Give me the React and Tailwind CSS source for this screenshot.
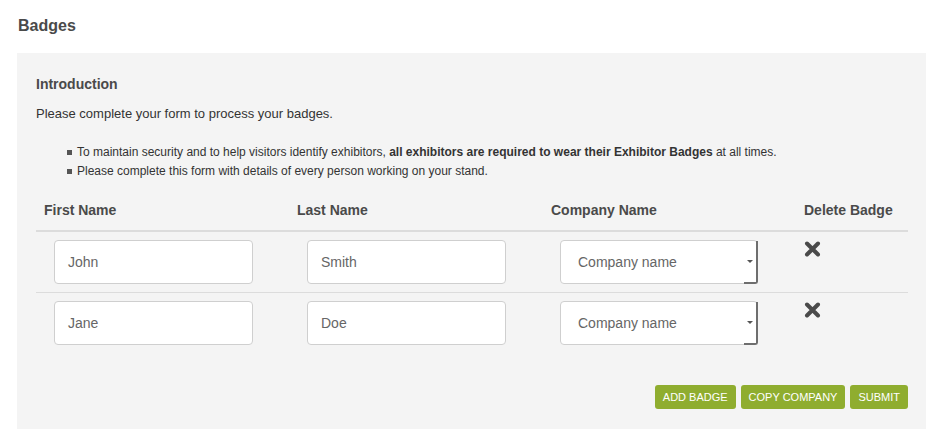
import React from 'react';

const badges = [
  { first: 'John', last: 'Smith' },
  { first: 'Jane', last: 'Doe' },
];

const CloseIcon = () => (
  <svg width="17" height="16" viewBox="0 0 17 16">
    <path d="M3 2.5 L14 13.5 M14 2.5 L3 13.5" stroke="#4a4a4a" strokeWidth="4" strokeLinecap="round" />
  </svg>
);

const TextBox = ({ value }) => (
  <div className="w-[199px] h-[44px] bg-white border border-[#cfcfcf] rounded-[4px] flex items-center px-[13px] text-[14px] text-[#666]">
    {value}
  </div>
);

const CompanySelect = () => (
  <div className="w-[198px] h-[44px] bg-white border border-[#cfcfcf] rounded-[4px] flex text-[14px] text-[#666]">
    <div className="flex-1 flex items-center pl-[17px]">Company name</div>
    <div className="w-[14px] flex items-center justify-center border-r-2 border-b-2 border-[#6e6e6e] rounded-br-[3px] -mr-px -mb-px">
      <svg width="6" height="3" viewBox="0 0 6 3">
        <path d="M0 0 L6 0 L3 3 Z" fill="#555" />
      </svg>
    </div>
  </div>
);

const Button = ({ children }) => (
  <button
    type="button"
    className="h-[24px] px-[8px] bg-[#8fad2f] text-white text-[11px] uppercase rounded-[3px] leading-none"
  >
    {children}
  </button>
);

const App = () => {
  return (
    <div className="min-h-[447px] bg-white font-['Liberation_Sans',Arial,sans-serif] text-[#444]">
      <h1 className="pl-[18px] pt-[15px] text-[16px] font-bold leading-[22px] text-[#4a4a4a]">Badges</h1>

      <div className="ml-[17px] mt-[16px] w-[909px] bg-[#f4f4f4] pl-[19px] pr-[18px] pt-[22px] pb-[20px]">
        <h2 className="text-[14px] font-bold leading-[18px] text-[#4a4a4a]">Introduction</h2>
        <p className="mt-[12px] text-[13px] leading-[18px] text-[#333]">Please complete your form to process your badges.</p>

        <ul className="mt-[20px] pl-[31px] text-[12px] leading-[19px] text-[#333]">
          <li className="flex items-center gap-[5px]">
            <span className="w-[5px] h-[5px] bg-[#555] shrink-0" />
            <span>
              To maintain security and to help visitors identify exhibitors,{' '}
              <b>all exhibitors are required to wear their Exhibitor Badges</b> at all times.
            </span>
          </li>
          <li className="flex items-center gap-[5px]">
            <span className="w-[5px] h-[5px] bg-[#555] shrink-0" />
            <span>Please complete this form with details of every person working on your stand.</span>
          </li>
        </ul>

        {/* Badge table */}
        <div className="mt-[20px]">
          <div className="grid grid-cols-[253px_254px_253px_1fr] border-b-2 border-[#dcdcdc] pb-[11px] text-[14px] font-bold leading-[18px] text-[#4a4a4a]">
            <div className="pl-[8px]">First Name</div>
            <div className="pl-[8px]">Last Name</div>
            <div className="pl-[8px]">Company Name</div>
            <div className="pl-[8px]">Delete Badge</div>
          </div>

          {badges.map((b, i) => (
            <div
              key={i}
              className={`grid grid-cols-[253px_254px_253px_1fr] pt-[8px] pb-[8px] ${i < badges.length - 1 ? 'border-b border-[#dcdcdc]' : ''}`}
            >
              <div className="pl-[18px]"><TextBox value={b.first} /></div>
              <div className="pl-[18px]"><TextBox value={b.last} /></div>
              <div className="pl-[17px]"><CompanySelect /></div>
              <div className="pl-[8px] pt-[1px]"><CloseIcon /></div>
            </div>
          ))}
        </div>

        <div className="mt-[32px] flex justify-end gap-[5px]">
          <Button>Add Badge</Button>
          <Button>Copy Company</Button>
          <Button>Submit</Button>
        </div>
      </div>
    </div>
  );
};

export default App;
